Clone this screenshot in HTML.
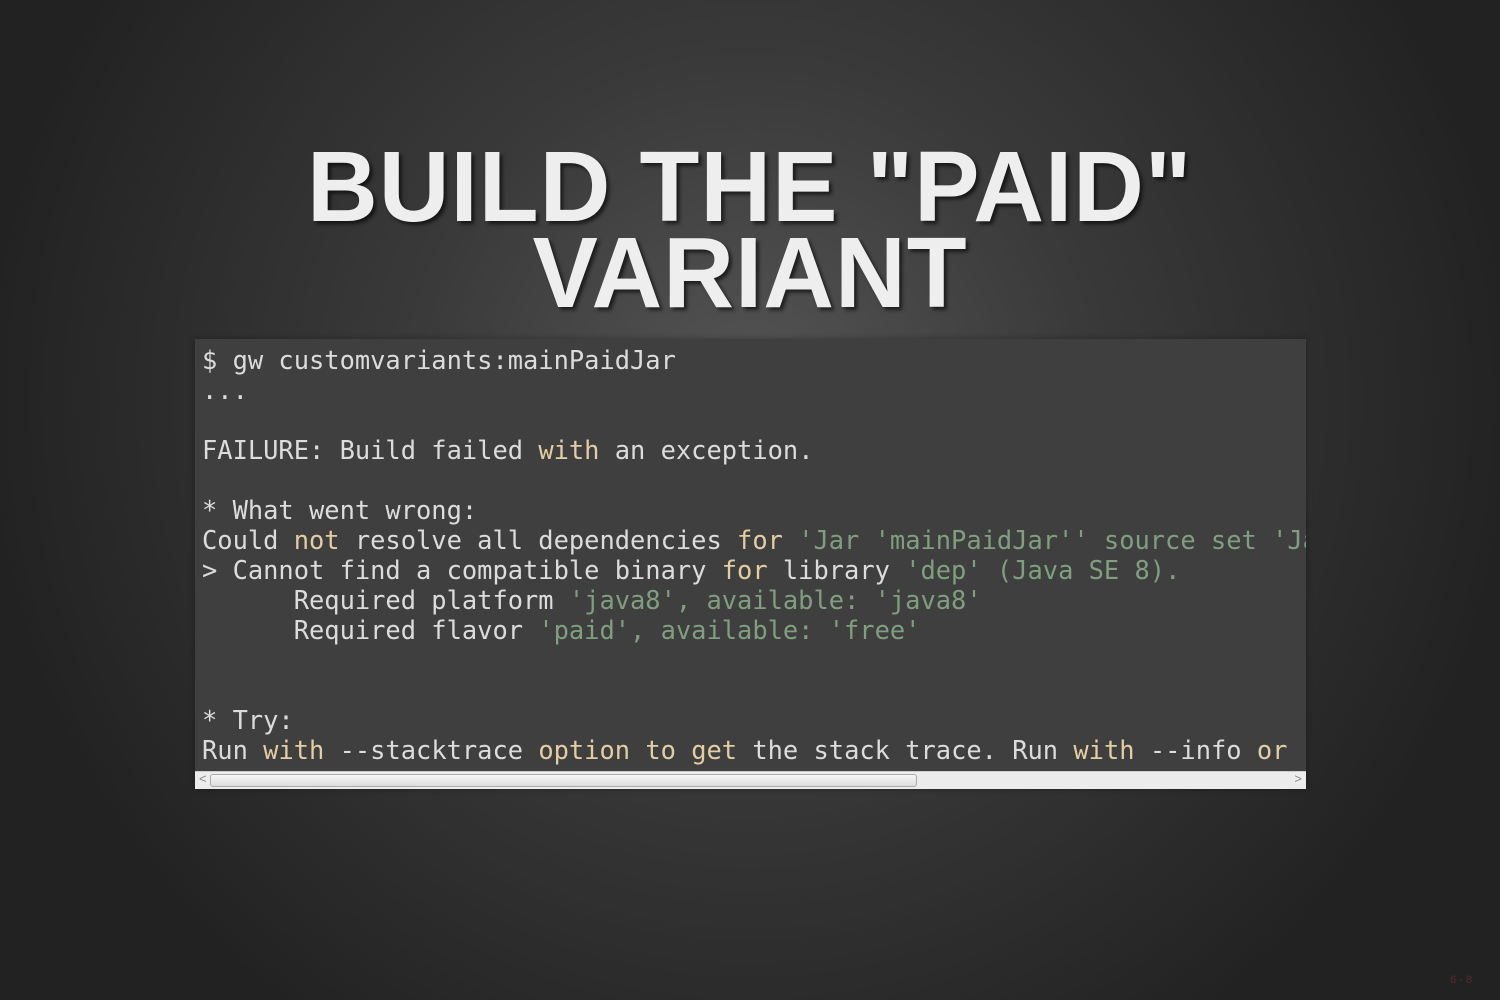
<!DOCTYPE html>
<html><head><meta charset="utf-8"><style>
html,body{margin:0;padding:0;width:1500px;height:1000px;overflow:hidden;}
body{background:radial-gradient(circle at 50% 40%, #555 0%, #3a3a3a 35%, #222 80%);font-family:"Liberation Sans",sans-serif;}
h1{position:absolute;left:0;width:1500px;top:144px;margin:0;text-align:center;color:#eee;font-weight:bold;font-size:100px;line-height:86px;text-shadow:3px 3px 4px rgba(0,0,0,.6);}
h1 span{display:inline-block;transform:scaleX(.98);letter-spacing:1px;}
.box{position:absolute;left:195px;top:339px;width:1111px;height:450px;background:#3f3f3f;box-shadow:0 0 6px rgba(0,0,0,.3);overflow:hidden;}
pre{margin:0;padding:6px 0 0 7px;font-family:"DejaVu Sans Mono",monospace;font-size:25.4px;line-height:30px;color:#dcdcdc;white-space:pre;}
.k{color:#e3cea3}.s{color:#7f9f7f}
.sb{position:absolute;left:0;bottom:0;width:1111px;height:17px;background:#ececec;border-top:1px solid #ccc;}
.th{position:absolute;left:15px;top:2px;width:705px;height:11px;border:1px solid #aaa;border-radius:3px;background:linear-gradient(#f6f6f6,#ddd);}
.al,.ar{position:absolute;top:-1px;font-size:13px;color:#888;}
.al{left:4px}.ar{right:4px}
.num{position:absolute;right:28px;bottom:14px;font-size:11px;color:#5a2a2a;}
</style></head><body>
<h1><span>BUILD THE "PAID"</span><br><span>VARIANT</span></h1>
<div class="box"><pre>$ gw customvariants:mainPaidJar
...

FAILURE: Build failed <span class="k">with</span> an exception.

* What went wrong:
Could <span class="k">not</span> resolve all dependencies <span class="k">for</span> <span class="s">'Jar 'mainPaidJar'' source set 'Java source 'main:java'</span>
&gt; Cannot find a compatible binary <span class="k">for</span> library <span class="s">'dep'</span> <span class="s">(Java SE 8).</span>
      Required platform <span class="s">'java8', available: 'java8'</span>
      Required flavor <span class="s">'paid', available: 'free'</span>


* Try:
Run <span class="k">with</span> --stacktrace <span class="k">option</span> <span class="k">to</span> <span class="k">get</span> the stack trace. Run <span class="k">with</span> --info <span class="k">or</span> --debug option</pre>
<div class="sb"><span class="al">&lt;</span><div class="th"></div><span class="ar">&gt;</span></div></div>
<div class="num">6 - 8</div>
</body></html>
